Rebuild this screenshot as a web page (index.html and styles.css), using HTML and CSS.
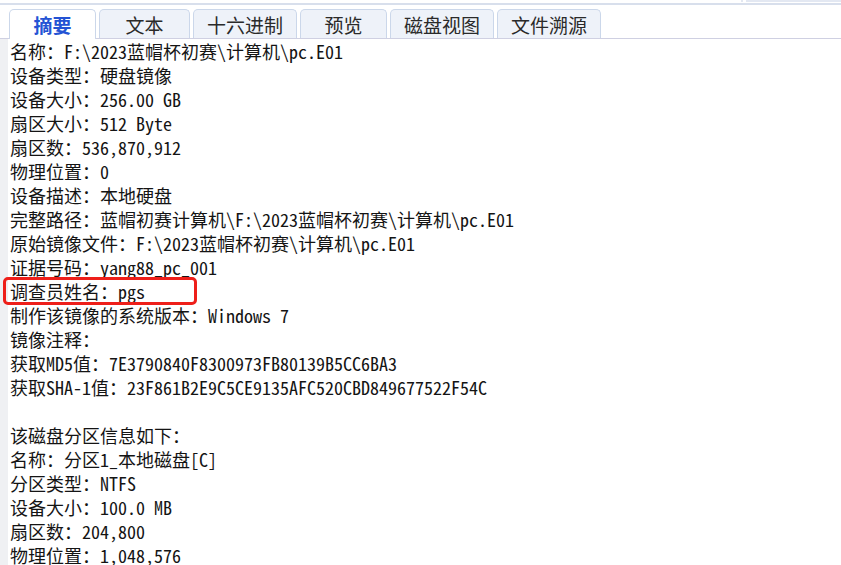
FILE: index.html
```html
<!DOCTYPE html>
<html lang="zh-CN">
<head>
<meta charset="utf-8">
<title>摘要</title>
<link rel="stylesheet" href="styles.css">
</head>
<body>
<div class="top-edge"><span class="tick"></span><span class="strip"></span></div>
<div class="tabbar">
  <div class="tab active">摘要</div>
  <div class="tab wide">文本</div>
  <div class="tab">十六进制</div>
  <div class="tab">预览</div>
  <div class="tab">磁盘视图</div>
  <div class="tab">文件溯源</div>
</div>
<div class="panel">
  <div class="gutter"></div>
  <div class="content">
    <div class="line">名称：F:\2023蓝帽杯初赛\计算机\pc.E01</div>
    <div class="line">设备类型：硬盘镜像</div>
    <div class="line">设备大小：256.00 GB</div>
    <div class="line">扇区大小：512 Byte</div>
    <div class="line">扇区数：536,870,912</div>
    <div class="line">物理位置：0</div>
    <div class="line">设备描述：本地硬盘</div>
    <div class="line">完整路径：蓝帽初赛计算机\F:\2023蓝帽杯初赛\计算机\pc.E01</div>
    <div class="line">原始镜像文件：F:\2023蓝帽杯初赛\计算机\pc.E01</div>
    <div class="line">证据号码：yang88_pc_001</div>
    <div class="line flagged">调查员姓名：pgs</div>
    <div class="line">制作该镜像的系统版本：Windows 7</div>
    <div class="line">镜像注释：</div>
    <div class="line">获取MD5值：7E3790840F8300973FB80139B5CC6BA3</div>
    <div class="line">获取SHA-1值：23F861B2E9C5CE9135AFC520CBD849677522F54C</div>
    <div class="line blank"></div>
    <div class="line">该磁盘分区信息如下：</div>
    <div class="line">名称：分区1_本地磁盘[C]</div>
    <div class="line">分区类型：NTFS</div>
    <div class="line">设备大小：100.0 MB</div>
    <div class="line">扇区数：204,800</div>
    <div class="line">物理位置：1,048,576</div>
  </div>
</div>
</body>
</html>
```

FILE: styles.css
```css
html, body {
  margin: 0;
  padding: 0;
  background: #ffffff;
  height: 100%;
  overflow: hidden;
}

body {
  font-family: "Noto Sans CJK SC", "Noto Sans", sans-serif;
  color: #111;
}

.top-edge {
  height: 2px;
  display: flex;
  justify-content: flex-end;
  gap: 3px;
}

.top-edge .tick {
  width: 2px;
  background: #e3e8f2;
}

.top-edge .strip {
  width: 95px;
  background: #e3e8f2;
}

.tabbar {
  margin-top: 1px;
  border-top: 2px solid #d8dfec;
  display: flex;
  align-items: flex-end;
  gap: 3px;
  padding: 4px 0 0 9px;
  height: 29px;
  border-bottom: 1px solid #cfd0e2;
}

.tab {
  box-sizing: border-box;
  height: 29px;
  min-width: 87px;
  padding: 0 13px;
  display: flex;
  align-items: center;
  justify-content: center;
  font-size: 19px;
  line-height: 1;
  color: #2a2a2a;
  background: #eef2f9;
  border: 1px solid #cbd7ea;
  border-bottom: none;
  border-radius: 5px 5px 0 0;
}

.tab.wide {
  min-width: 91px;
}

.tab.active {
  background: #ffffff;
  color: #2453d4;
  font-weight: 700;
  height: 30px;
  margin-bottom: -1px;
}

.panel {
  display: flex;
  height: 540px;
}

.gutter {
  width: 8px;
  flex: none;
  background: #eff0f3;
}

.content {
  padding-left: 2px;
  font-family: "Noto Sans Mono CJK SC", "Noto Sans CJK SC", "Liberation Mono", monospace;
  font-size: 18px;
  color: #141414;
}

.line {
  height: 24px;
  line-height: 24px;
  white-space: pre;
}

.line.flagged {
  position: relative;
}

.line.flagged::after {
  content: "";
  position: absolute;
  box-sizing: border-box;
  top: -2px;
  bottom: -2px;
  left: -7px;
  width: 194px;
  border: 3px solid #ee1f1a;
  border-radius: 5px;
}
```
